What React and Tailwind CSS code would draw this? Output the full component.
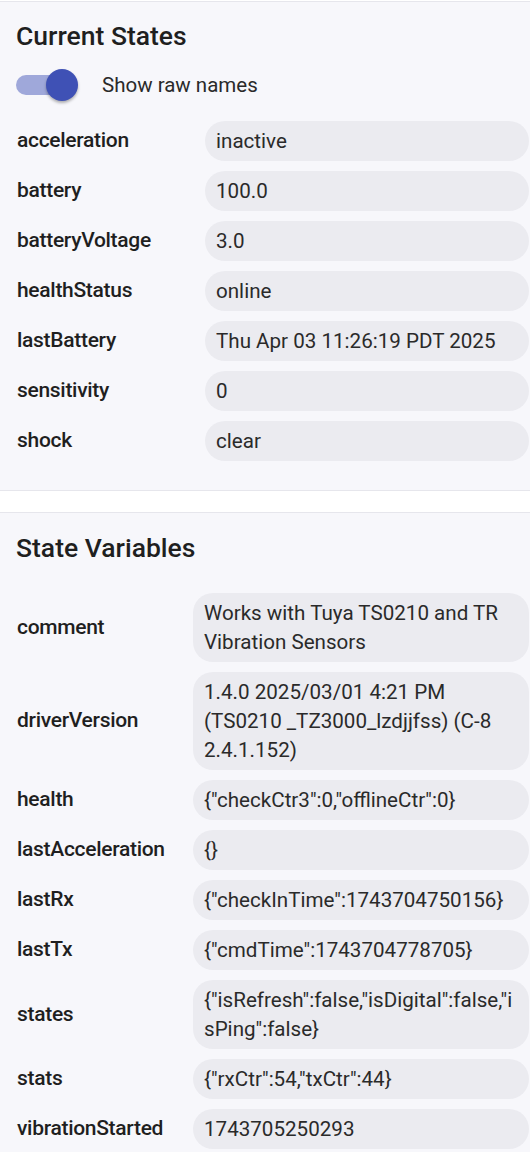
const currentStates = [
  ['acceleration', 'inactive'],
  ['battery', '100.0'],
  ['batteryVoltage', '3.0'],
  ['healthStatus', 'online'],
  ['lastBattery', 'Thu Apr 03 11:26:19 PDT 2025'],
  ['sensitivity', '0'],
  ['shock', 'clear'],
];

const stateVariables = [
  ['comment', 'Works with Tuya TS0210 and TR Vibration Sensors'],
  ['driverVersion', '1.4.0 2025/03/01 4:21 PM (TS0210 _TZ3000_lzdjjfss) (C-8 2.4.1.152)'],
  ['health', '{"checkCtr3":0,"offlineCtr":0}'],
  ['lastAcceleration', '{}'],
  ['lastRx', '{"checkInTime":1743704750156}'],
  ['lastTx', '{"cmdTime":1743704778705}'],
  ['states', '{"isRefresh":false,"isDigital":false,"isPing":false}'],
  ['stats', '{"rxCtr":54,"txCtr":44}'],
  ['vibrationStarted', '1743705250293'],
];

const Row = ({ name, value, labelWidth }) => {
  // json blobs wrap anywhere, plain text wraps on words
  const isJson = value.startsWith('{');
  return (
    <div className="flex items-center">
      <div className={`${labelWidth} shrink-0 pl-[17px] text-[21px] font-medium text-[#1f1f1f] tracking-[-0.3px]`}>
        {name}
      </div>
      <div
        className={`flex-1 min-w-0 bg-[#ebebf0] rounded-[20px] px-[11px] py-[5.5px] text-[20.6px] leading-[29px] text-[#2a2a2a] mr-px ${
          isJson ? 'break-all' : 'break-words'
        }`}
      >
        {value}
      </div>
    </div>
  );
};

export default function App() {
  return (
    <div className="min-h-screen bg-white" style={{ fontFamily: 'Roboto, "Noto Sans", sans-serif' }}>
      {/* Current States */}
      <div className="bg-[#f7f7fb] border-t border-b border-[#e6e6ec] mt-px pt-[18px] pb-[29px]">
        <h2 className="pl-[16px] text-[26.5px] leading-[32px] font-medium text-[#1f1f1f]">Current States</h2>
        <div className="flex items-center h-[40px] mt-[13px] pl-[16px]">
          <div className="relative w-[63px] h-[32px] flex items-center">
            <div className="w-[56px] h-[20px] rounded-full bg-[#9fa8da]"></div>
            <div className="absolute left-[30px] top-0 w-[32px] h-[32px] rounded-full bg-[#3f51b5] shadow-[0_2px_3px_rgba(0,0,0,0.3)]"></div>
          </div>
          <span className="ml-[23px] text-[20.5px] text-[#2a2a2a]">Show raw names</span>
        </div>
        <div className="flex flex-col gap-[10px] mt-[16px]">
          {currentStates.map(([name, value]) => (
            <Row key={name} name={name} value={value} labelWidth="w-[205px]" />
          ))}
        </div>
      </div>

      <div className="h-[21px] bg-white"></div>

      {/* State Variables */}
      <div className="bg-[#f7f7fb] border-t border-[#e6e6ec] pt-[19px] pb-[30px]">
        <h2 className="pl-[16px] text-[26.5px] leading-[32px] font-medium text-[#1f1f1f]">State Variables</h2>
        <div className="flex flex-col gap-[10px] mt-[29px]">
          {stateVariables.map(([name, value]) => (
            <Row key={name} name={name} value={value} labelWidth="w-[193px]" />
          ))}
        </div>
      </div>
    </div>
  );
}
